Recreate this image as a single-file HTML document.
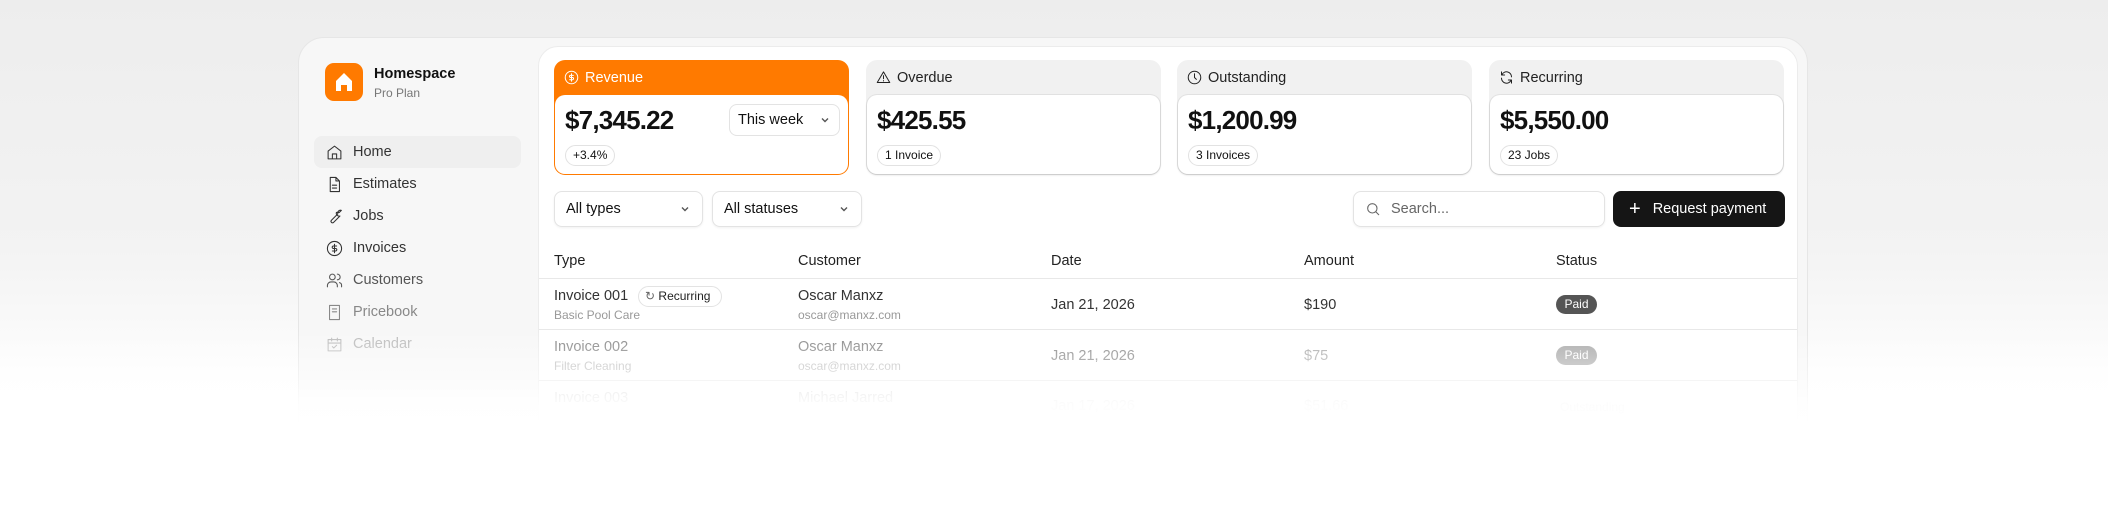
<!DOCTYPE html>
<html><head><meta charset="utf-8"><style>
*{box-sizing:border-box;margin:0;padding:0}
body{width:2108px;height:512px;overflow:hidden;font-family:"Liberation Sans",sans-serif;color:#111;background:linear-gradient(#ededed 0px,#f3f3f3 250px,#fff 400px);position:relative}
.abs{position:absolute}
.outer{left:298px;top:37px;width:1510px;height:420px;border-radius:26px;background:#f7f7f7;border:1px solid #e6e6e6}
.main{left:538px;top:46px;width:1260px;height:420px;border-radius:20px;background:#fff;border:1px solid #ececec}
.logo{left:325px;top:63px;width:38px;height:38px;border-radius:9px;background:#ff7a00}
.nav{left:314px;width:207px;height:32px;border-radius:8px;font-size:14.5px;color:#333;display:flex;align-items:center;padding-left:12px}
.nav svg{width:17px;height:17px;margin-right:10px;fill:none;stroke:currentColor;stroke-width:1.5;stroke-linecap:round;stroke-linejoin:round}
.card{top:60px;width:295px;height:115px;border-radius:11px;background:#f1f1f1}
.card .hd{height:35px;display:flex;align-items:center;padding-left:10px;font-size:14.5px;color:#222}
.card .hd svg{width:15px;height:15px;margin-right:6px;fill:none;stroke:currentColor;stroke-width:1.6;stroke-linecap:round;stroke-linejoin:round}
.card .bd{position:absolute;left:1px;right:1px;top:35px;bottom:1px;background:#fff;border-radius:10px;box-shadow:0 1px 2px rgba(0,0,0,.15),0 0 0 1px #e4e4e4}
.val{position:absolute;left:10px;top:10px;font-size:26px;font-weight:bold;letter-spacing:-0.8px}
.pill{position:absolute;left:10px;top:50px;height:21px;border:1px solid #e2e2e2;border-radius:11px;font-size:12px;padding:0 7px;line-height:19px;color:#111}
.sel{top:191px;height:36px;border:1px solid #e3e3e3;border-radius:8px;font-size:14.5px;display:flex;align-items:center;padding:0 11px;box-shadow:0 1px 2px rgba(0,0,0,.06)}
.chev{margin-left:auto;width:12px;height:12px;fill:none;stroke:#555;stroke-width:1.4}
.th{top:253px;font-size:14.5px;color:#222}
.line{left:539px;width:1258px;height:1px;background:#e8e8e8}
.t{font-size:14.5px}
.s{font-size:12px;color:#999}
.paid{width:41px;height:19px;border-radius:10px;color:#fff;font-size:12px;text-align:center;line-height:19px}
.fade{left:0;top:330px;width:2108px;height:182px;background:linear-gradient(rgba(255,255,255,0) 0,rgba(255,255,255,.5) 45px,rgba(255,255,255,.92) 75px,#fff 95px)}
</style></head><body>
<div class="abs outer"></div>
<div class="abs main"></div>
<div class="abs logo"><svg width="38" height="38" viewBox="0 0 38 38"><path d="M11 18 L19 10 L27 18 V28 H22 V22 H16 V28 H11 Z" fill="#fff"/></svg></div>
<div class="abs" style="left:374px;top:66px;font-size:14.5px;font-weight:bold">Homespace</div>
<div class="abs" style="left:374px;top:86px;font-size:12px;color:#777">Pro Plan</div>

<div class="abs nav" style="top:136px;background:#efefef"><svg viewBox="0 0 24 24"><path d="M3 10 L12 3 L21 10 V21 H3 Z M9 21 V14 H15 V21"/></svg>Home</div>
<div class="abs nav" style="top:168px"><svg viewBox="0 0 24 24"><path d="M6 2 H14 L19 7 V22 H6 Z M14 2 V7 H19 M9 13 H15 M9 17 H15"/></svg>Estimates</div>
<div class="abs nav" style="top:200px"><svg viewBox="0 0 24 24"><path d="M14.7 6.3 a4 4 0 0 0 5 5 l-9 9 a2 2 0 0 1 -3-3 l9-9 a4 4 0 0 1 5-5 l-3 3 z"/></svg>Jobs</div>
<div class="abs nav" style="top:232px"><svg viewBox="0 0 24 24"><circle cx="12" cy="12" r="10"/><path d="M15 8.5 H10.5 a1.75 1.75 0 0 0 0 3.5 h3 a1.75 1.75 0 0 1 0 3.5 H9 M12 6 V18"/></svg>Invoices</div>
<div class="abs nav" style="top:264px;color:#555"><svg viewBox="0 0 24 24"><circle cx="9" cy="7" r="4"/><path d="M2 21 v-2 a5 5 0 0 1 5-5 h4 a5 5 0 0 1 5 5 v2 M16 3 a4 4 0 0 1 0 8 M22 21 v-2 a4 4 0 0 0 -3-4"/></svg>Customers</div>
<div class="abs nav" style="top:296px;color:#888"><svg viewBox="0 0 24 24"><path d="M5 2 H19 V22 H5 Z M9 7 H15 M9 11 H15"/></svg>Pricebook</div>
<div class="abs nav" style="top:328px;color:#bbb"><svg viewBox="0 0 24 24"><path d="M3 5 H21 V21 H3 Z M3 10 H21 M8 3 V7 M16 3 V7 M9 15 l2 2 4-4"/></svg>Calendar</div>

<div class="abs card" style="left:554px;background:#ff7a00"><div class="hd" style="color:#fff"><svg viewBox="0 0 24 24"><circle cx="12" cy="12" r="10"/><path d="M15 8.5 H10.5 a1.75 1.75 0 0 0 0 3.5 h3 a1.75 1.75 0 0 1 0 3.5 H9 M12 6 V18"/></svg>Revenue</div>
<div class="bd" style="box-shadow:none"><div class="val">$7,345.22</div>
<div style="position:absolute;left:174px;top:9px;width:111px;height:32px;border:1px solid #e3e3e3;border-radius:8px;font-size:14.5px;display:flex;align-items:center;padding:0 8px">This week<svg class="chev" viewBox="0 0 12 12"><path d="M3 4.5 L6 7.5 L9 4.5"/></svg></div>
<div class="pill">+3.4%</div></div></div>

<div class="abs card" style="left:866px"><div class="hd"><svg viewBox="0 0 24 24"><path d="M12 3 L22 20 H2 Z M12 9 V14 M12 17 V17.5"/></svg>Overdue</div><div class="bd"><div class="val">$425.55</div><div class="pill">1 Invoice</div></div></div>
<div class="abs card" style="left:1177px"><div class="hd"><svg viewBox="0 0 24 24"><circle cx="12" cy="12" r="10"/><path d="M12 6 V12 L15 15"/></svg>Outstanding</div><div class="bd"><div class="val">$1,200.99</div><div class="pill">3 Invoices</div></div></div>
<div class="abs card" style="left:1489px"><div class="hd"><svg viewBox="0 0 24 24"><path d="M20 11 A8 8 0 0 0 5 7 M4 3 V8 H9 M4 13 A8 8 0 0 0 19 17 M20 21 V16 H15"/></svg>Recurring</div><div class="bd"><div class="val">$5,550.00</div><div class="pill">23 Jobs</div></div></div>

<div class="abs sel" style="left:554px;width:149px">All types<svg class="chev" viewBox="0 0 12 12"><path d="M3 4.5 L6 7.5 L9 4.5"/></svg></div>
<div class="abs sel" style="left:712px;width:150px">All statuses<svg class="chev" viewBox="0 0 12 12"><path d="M3 4.5 L6 7.5 L9 4.5"/></svg></div>
<div class="abs sel" style="left:1353px;width:252px;color:#666"><svg viewBox="0 0 24 24" style="width:16px;height:16px;margin-right:10px;fill:none;stroke:#666;stroke-width:1.6"><circle cx="11" cy="11" r="7"/><path d="M16 16 L21 21"/></svg>Search...</div>
<div class="abs" style="left:1613px;top:191px;width:172px;height:36px;border-radius:8px;background:#151515;color:#fff;font-size:14.5px;display:flex;align-items:center;padding-left:16px"><span style="font-size:20px;margin-right:12px;font-weight:300">+</span>Request payment</div>

<div class="abs th" style="left:554px">Type</div>
<div class="abs th" style="left:798px">Customer</div>
<div class="abs th" style="left:1051px">Date</div>
<div class="abs th" style="left:1304px">Amount</div>
<div class="abs th" style="left:1556px">Status</div>
<div class="abs line" style="top:278px"></div>

<div class="abs t" style="left:554px;top:288px;color:#333">Invoice 001</div>
<div class="abs" style="left:638px;top:286px;width:84px;height:21px;border:1px solid #e3e3e3;border-radius:11px;font-size:12px;line-height:19px;padding-left:6px;color:#222"><span style="color:#666">&#x21bb;</span> Recurring</div>
<div class="abs s" style="left:554px;top:308px">Basic Pool Care</div>
<div class="abs t" style="left:798px;top:288px;color:#333">Oscar Manxz</div>
<div class="abs s" style="left:798px;top:308px">oscar@manxz.com</div>
<div class="abs t" style="left:1051px;top:297px;color:#333">Jan 21, 2026</div>
<div class="abs t" style="left:1304px;top:297px;color:#333">$190</div>
<div class="abs paid" style="left:1556px;top:295px;background:#555">Paid</div>
<div class="abs line" style="top:329px"></div>

<div class="abs t" style="left:554px;top:339px;color:#888">Invoice 002</div>
<div class="abs s" style="left:554px;top:359px;color:#bbb">Filter Cleaning</div>
<div class="abs t" style="left:798px;top:339px;color:#888">Oscar Manxz</div>
<div class="abs s" style="left:798px;top:359px;color:#bbb">oscar@manxz.com</div>
<div class="abs t" style="left:1051px;top:348px;color:#888">Jan 21, 2026</div>
<div class="abs t" style="left:1304px;top:348px;color:#aaa">$75</div>
<div class="abs paid" style="left:1556px;top:346px;background:#aaa">Paid</div>
<div class="abs line" style="top:380px"></div>

<div class="abs t" style="left:554px;top:390px;color:#ccc">Invoice 003</div>
<div class="abs t" style="left:798px;top:390px;color:#ccc">Michael Jarred</div>
<div class="abs t" style="left:1051px;top:398px;color:#ddd">Jan 17, 2026</div>
<div class="abs t" style="left:1304px;top:398px;color:#ddd">$51.66</div>
<div class="abs s" style="left:1560px;top:400px;color:#ddd">Outstanding</div>

<div class="abs fade"></div>
</body></html>
